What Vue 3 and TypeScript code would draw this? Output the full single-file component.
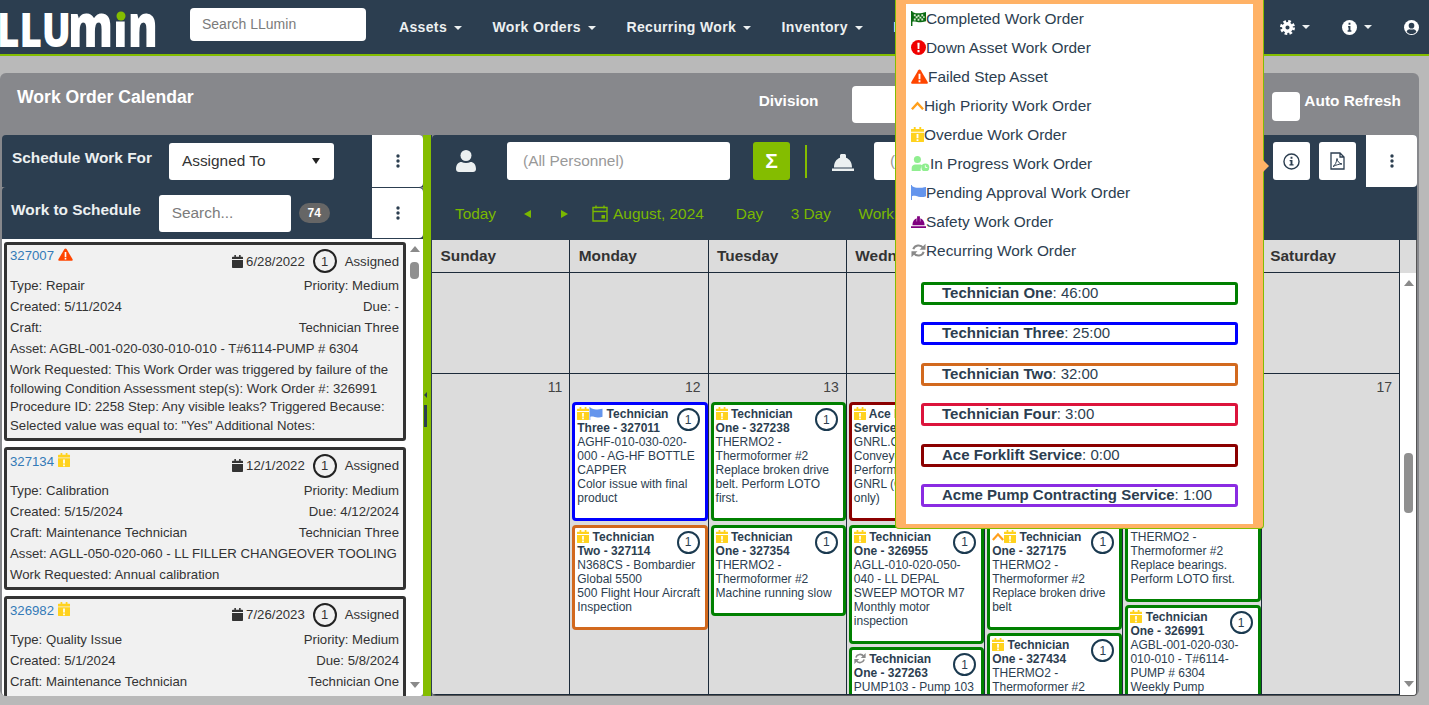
<script setup lang="ts">
interface WorkCard {
  id: string;
  icon: string;
  date: string;
  type: string;
  priority: string;
  created: string;
  due: string;
  craft: string;
  tech: string;
  asset: string;
  request: string;
}
interface CalEvent {
  icons: string[];
  title: string;
  asset: string;
  note: string;
  color: string;
}

const navItems = ['Assets', 'Work Orders', 'Recurring Work', 'Inventory', 'Insights'];
const days = ['Sunday', 'Monday', 'Tuesday', 'Wednesday', 'Thursday', 'Friday', 'Saturday'];

const cards: WorkCard[] = [
  { id: '327007', icon: 'warn', date: '6/28/2022', type: 'Repair', priority: 'Medium', created: '5/11/2024', due: '-', craft: '', tech: 'Technician Three', asset: 'AGBL-001-020-030-010-010 - T#6114-PUMP # 6304', request: 'This Work Order was triggered by failure of the following Condition Assessment step(s): Work Order #: 326991 Procedure ID: 2258 Step: Any visible leaks? Triggered Because: Selected value was equal to: "Yes" Additional Notes:' },
  { id: '327134', icon: 'overdue', date: '12/1/2022', type: 'Calibration', priority: 'Medium', created: '5/15/2024', due: '4/12/2024', craft: 'Maintenance Technician', tech: 'Technician Three', asset: 'AGLL-050-020-060 - LL FILLER CHANGEOVER TOOLING', request: 'Annual calibration' },
  { id: '326982', icon: 'overdue', date: '7/26/2023', type: 'Quality Issue', priority: 'Medium', created: '5/1/2024', due: '5/8/2024', craft: 'Maintenance Technician', tech: 'Technician One', asset: 'AGBL-001-020-030-010-010 - T#6114-PUMP # 6304', request: 'Weekly inspection' },
];

const green = '#008000';
const columns: { day: string; events: CalEvent[] }[] = [
  { day: '11', events: [] },
  { day: '12', events: [
    { icons: ['overdue', 'flag'], title: 'Technician Three - 327011', asset: 'AGHF-010-030-020-000 - AG-HF BOTTLE CAPPER', note: 'Color issue with final product', color: '#0000ff' },
    { icons: ['overdue'], title: 'Technician Two - 327114', asset: 'N368CS - Bombardier Global 5500', note: '500 Flight Hour Aircraft Inspection', color: '#d2691e' },
  ] },
  { day: '13', events: [
    { icons: ['overdue'], title: 'Technician One - 327238', asset: 'THERMO2 - Thermoformer #2', note: 'Replace broken drive belt. Perform LOTO first.', color: green },
    { icons: ['overdue'], title: 'Technician One - 327354', asset: 'THERMO2 - Thermoformer #2', note: 'Machine running slow', color: green },
  ] },
  { day: '14', events: [
    { icons: ['overdue'], title: 'Ace Forklift Service - 327301', asset: 'GNRL.CONV01 - Conveyor Line', note: 'Perform monthly lube GNRL (Conveyor belts only)', color: '#8b0000' },
    { icons: ['overdue'], title: 'Technician One - 326955', asset: 'AGLL-010-020-050-040 - LL DEPAL SWEEP MOTOR M7', note: 'Monthly motor inspection', color: green },
    { icons: ['sync'], title: 'Technician One - 327263', asset: 'PUMP103 - Pump 103', note: 'Quarterly pump service', color: green },
  ] },
  { day: '15', events: [
    { icons: ['overdue'], title: 'Technician One - 327101', asset: 'THERMO2 - Thermoformer #2', note: 'Replace broken drive belt. Perform LOTO first.', color: green },
    { icons: ['chevron', 'overdue'], title: 'Technician One - 327175', asset: 'THERMO2 - Thermoformer #2', note: 'Replace broken drive belt', color: green },
    { icons: ['overdue'], title: 'Technician One - 327434', asset: 'THERMO2 - Thermoformer #2', note: 'Replace bearings', color: green },
  ] },
  { day: '16', events: [
    { icons: ['overdue'], title: 'Technician One - 327120', asset: 'THERMO2 - Thermoformer #2', note: 'Inspect', color: green },
    { icons: ['overdue'], title: 'Technician One - 327288', asset: 'THERMO2 - Thermoformer #2', note: 'Replace bearings. Perform LOTO first.', color: green },
    { icons: ['overdue'], title: 'Technician One - 326991', asset: 'AGBL-001-020-030-010-010 - T#6114-PUMP # 6304', note: 'Weekly Pump Inspection', color: green },
  ] },
  { day: '17', events: [] },
];

const legend = [
  { icon: 'checker', label: 'Completed Work Order', w: 15 },
  { icon: 'down', label: 'Down Asset Work Order', w: 15 },
  { icon: 'warn', label: 'Failed Step Asset', w: 17 },
  { icon: 'chevron', label: 'High Priority Work Order', w: 13 },
  { icon: 'overdue', label: 'Overdue Work Order', w: 13 },
  { icon: 'progress', label: 'In Progress Work Order', w: 19 },
  { icon: 'flag', label: 'Pending Approval Work Order', w: 15 },
  { icon: 'hat', label: 'Safety Work Order', w: 15 },
  { icon: 'sync', label: 'Recurring Work Order', w: 15 },
];

const totals = [
  { name: 'Technician One', time: '46:00', color: green },
  { name: 'Technician Three', time: '25:00', color: '#0000ff' },
  { name: 'Technician Two', time: '32:00', color: '#d2691e' },
  { name: 'Technician Four', time: '3:00', color: '#dc143c' },
  { name: 'Ace Forklift Service', time: '0:00', color: '#8b0000' },
  { name: 'Acme Pump Contracting Service', time: '1:00', color: '#8a2be2' },
];
</script>

<template>
  <svg class="sprite" aria-hidden="true">
    <symbol id="i-cal" viewBox="1 0 14 16" preserveAspectRatio="none"><path d="M4 0h2v2h4V0h2v2h2a1 1 0 0 1 1 1v2H1V3a1 1 0 0 1 1-1h2z" /><path d="M1 6h14v9a1 1 0 0 1-1 1H2a1 1 0 0 1-1-1z" /></symbol>
    <symbol id="i-overdue" viewBox="1 0 14 16" preserveAspectRatio="none"><path fill="#ffd21e" d="M4 0h2v2h4V0h2v2h2.500a.5.5 0 0 1 .5.5V5H1V2.500a.5.5 0 0 1 .5-.5H4z" /><path fill="#ffd21e" d="M1 6h14v9.500a.5.5 0 0 1-.5.5h-13a.5.5 0 0 1-.5-.5z" /><path fill="#fff" d="M7 7.500h2V12H7zM7 13h2v2H7z" /></symbol>
    <symbol id="i-warn" viewBox="0 0 18 16"><path fill="#ff4500" d="M9 .5c.6 0 1 .3 1.300.8l7.400 12.600c.5.900-.1 1.900-1.100 1.900H1.400C.4 15.800-.2 14.800.3 13.900L7.700 1.300C8 .8 8.400.5 9 .5z" /><path fill="#fff" d="M8 5h2v6H8zM8 12h2v2H8z" /></symbol>
    <symbol id="i-down" viewBox="0 0 16 16"><circle cx="8" cy="8" r="8" fill="#f00000" /><path fill="#fff" d="M6.800 3h2.400L8.900 9.500H7.100zM6.900 10.700h2.200v2.300H6.900z" /></symbol>
    <symbol id="i-chevron" viewBox="0 0 14 10"><path d="M1 9 7 2.500 13 9" fill="none" stroke="#ff9f1c" stroke-width="2.600" /></symbol>
    <symbol id="i-flag" viewBox="0 0 16 16"><path fill="#6495ed" d="M0 0h1v16H0zM1 1c3 1.500 4 2 7 2s5-.5 8-1v10c-3 1.200-5 1-8 .5S4 11 1 12z" /></symbol>
    <symbol id="i-checker" viewBox="0 0 16 16"><path fill="#0a6b12" d="M0 0h1.500v16H0zM1.500 1c3 1.300 4 1.500 6.500 1.500s5-.5 8-1.500v10c-3 1-5.500 1.300-8 1s-4-1-6.500-.5z" /><path fill="#d9ead0" d="M3 3.500h2v2H3zM7 4h2v2H7zM11 3.500h2v2h-2zM5 5.700h2v2H5zM9 6h2v2H9zM13 5.500h1.500v2H13zM3 8h2v2H3zM7 8.300h2v2H7zM11 8h2v2h-2z" /></symbol>
    <symbol id="i-progress" viewBox="0 0 20 17"><circle cx="6.500" cy="4" r="4" fill="#90ee90" /><path fill="#90ee90" d="M0 17v-3.500C0 11 2 9.500 4 9.500h5c1.500 0 2.500.5 3 1.500-1.500 1.300-2.300 3.500-1.700 6z" /><circle cx="15.500" cy="13" r="4.500" fill="#90ee90" /><path d="M15.500 10.500V13h2.200" fill="none" stroke="#fff" stroke-width="1" /></symbol>
    <symbol id="i-hat" viewBox="0 0 16 14"><path fill="#800080" d="M0 12h16v2H0zM1.500 11c0-4 1.800-6.600 4.500-7.500V7h.5V1.500h3V7h.5V3.500c2.700.9 4.500 3.500 4.500 7.500z" /></symbol>
    <symbol id="i-sync" viewBox="0 0 16 16"><g fill="none" stroke="#8a8a8a" stroke-width="2.200"><path d="M13 5.200A6 6 0 0 0 2.400 6.600" /><path d="M3 10.800a6 6 0 0 0 10.600-1.400" /></g><path fill="#8a8a8a" d="M15.500 .8v6.400H9.100zM.5 15.200V8.800h6.400z" /></symbol>
    <symbol id="i-user" viewBox="0 0 20 22"><circle cx="10" cy="5.500" r="5.500" fill="#ecf0f1" /><path fill="#ecf0f1" d="M0 19c0-4.500 2.500-7 5.500-7 1.400.7 2.900 1 4.500 1s3.100-.3 4.500-1c3 0 5.500 2.500 5.500 7 0 1.700-1.300 3-3 3H3c-1.700 0-3-1.300-3-3z" /></symbol>
    <symbol id="i-hardhat" viewBox="0 0 22 19"><path fill="#ecf0f1" d="M0 16.500h22V19H0zM2 15.500c0-5 2.300-8.500 6-9.800V3.500C8 2.700 8.700 2 9.500 2h3c.8 0 1.500.7 1.500 1.500v2.200c3.700 1.300 6 4.800 6 9.800z" /></symbol>
    <symbol id="i-kebab" viewBox="0 0 4 14"><circle cx="2" cy="2" r="1.700" /><circle cx="2" cy="7" r="1.700" /><circle cx="2" cy="12" r="1.700" /></symbol>
  </svg>

  <div class="page">
    <header class="topnav">
      <svg class="logo" width="160" height="46" viewBox="0 0 160 46">
        <text x="-3" y="43" font-size="47" textLength="74" lengthAdjust="spacingAndGlyphs">LLU</text>
        <text x="68" y="43" font-size="60" textLength="90" lengthAdjust="spacingAndGlyphs">min</text>
        <rect x="114" y="0" width="14" height="17.500" fill="#2c3e50" />
        <circle cx="121" cy="12" r="4.500" fill="#84bd00" />
      </svg>
      <input class="nav-search" placeholder="Search LLumin" />
      <nav class="nav-links">
        <span v-for="item in navItems" :key="item" class="nav-link">{{ item }}</span>
      </nav>
      <div class="nav-icons">
        <span class="nav-icon caret">
          <svg width="15" height="15" viewBox="0 0 16 16"><circle cx="8" cy="8" r="4" fill="none" stroke="#fff" stroke-width="3.600" /><circle cx="8" cy="8" r="6.500" fill="none" stroke="#fff" stroke-width="3" stroke-dasharray="2.800 2.300" /></svg>
        </span>
        <span class="nav-icon caret">
          <svg width="15" height="15" viewBox="0 0 16 16"><circle cx="8" cy="8" r="8" fill="#fff" /><path fill="#2c3e50" d="M7 3h2v2H7zM6.500 6.500H9V11h1v1.500H6V11h1V8H6.500z" /></svg>
        </span>
        <span class="nav-icon">
          <svg width="15" height="15" viewBox="0 0 16 16"><circle cx="8" cy="8" r="8" fill="#fff" /><circle cx="8" cy="6" r="3" fill="#2c3e50" /><path fill="#2c3e50" d="M2.800 12.500C3.500 10.500 5 9.800 6 9.800c1.300.5 2.700.5 4 0 1 0 2.500.7 3.200 2.700C12 14 10 15 8 15s-4-1-5.200-2.500z" /></svg>
        </span>
      </div>
    </header>

    <main class="panel">
      <div class="panel-head">
        <h1>Work Order Calendar</h1>
        <span class="division">Division</span>
        <div class="division-box"></div>
        <label class="refresh"><span class="refresh-box"></span><span class="refresh-text">Auto Refresh</span></label>
      </div>

      <div class="panel-body">
        <section class="left">
          <div class="bar">
            <span class="bar-title">Schedule Work For</span>
            <div class="assigned">Assigned To<i class="down-arrow"></i></div>
            <button class="kebab"><svg width="4" height="14" fill="#2c3e50"><use href="#i-kebab" /></svg></button>
          </div>
          <div class="bar bar-second">
            <span class="bar-title">Work to Schedule</span>
            <input class="work-search" placeholder="Search..." />
            <span class="count">74</span>
            <button class="kebab"><svg width="4" height="14" fill="#2c3e50"><use href="#i-kebab" /></svg></button>
          </div>
          <div class="list-wrap">
            <div class="list">
              <article v-for="c in cards" :key="c.id" class="card">
                <div class="card-top">
                  <span class="card-id">{{ c.id }} <svg class="card-flag" :width="c.icon === 'warn' ? 15 : 12" :height="c.icon === 'warn' ? 13 : 14"><use :href="'#i-' + c.icon" /></svg></span>
                  <span class="card-meta">
                    <svg class="card-cal" width="11" height="13" fill="#333"><use href="#i-cal" /></svg>
                    <span>{{ c.date }}</span>
                    <span class="qty">1</span>
                    <span>Assigned</span>
                  </span>
                </div>
                <div class="row"><span>Type: {{ c.type }}</span><span>Priority: {{ c.priority }}</span></div>
                <div class="row"><span>Created: {{ c.created }}</span><span>Due: {{ c.due }}</span></div>
                <div class="row"><span>Craft: {{ c.craft }}</span><span>{{ c.tech }}</span></div>
                <div class="row">Asset: {{ c.asset }}</div>
                <div class="request">Work Requested: {{ c.request }}</div>
              </article>
            </div>
            <div class="scroll">
              <i class="sb-up"></i>
              <i class="sb-thumb sb-thumb-left"></i>
              <i class="sb-fill"></i>
              <i class="sb-down"></i>
            </div>
          </div>
        </section>

        <div class="splitter"><i class="split-arrow"></i><i class="split-grip"></i></div>

        <section class="right">
          <div class="toolbar">
            <svg class="tool-user" width="20" height="22"><use href="#i-user" /></svg>
            <input class="tool-input" placeholder="(All Personnel)" />
            <button class="sigma">Σ</button>
            <i class="divider"></i>
            <svg class="tool-hat" width="22" height="19"><use href="#i-hardhat" /></svg>
            <input class="tool-input second" placeholder="(All Crafts)" />
            <button class="tool-btn">
              <svg width="17" height="17" viewBox="0 0 18 18"><circle cx="9" cy="9" r="8" fill="none" stroke="#2c3e50" stroke-width="1.500" /><path fill="#2c3e50" d="M8 4h2v2H8zM7 7.500h3V12h1.200v1.300H6.800V12H8V8.800H7z" /></svg>
            </button>
            <button class="tool-btn">
              <svg width="15" height="18" viewBox="0 0 15 18"><path d="M1 1h9l4 4v12H1z M10 1v4h4" fill="none" stroke="#2c3e50" stroke-width="1.300" /><path d="M3 14.500c2-1 3.500-4 4-8 .5 3 2 5 5 5.500-3 0-6 1-9 2.500z" fill="none" stroke="#2c3e50" stroke-width="1" /></svg>
            </button>
            <button class="kebab"><svg width="4" height="14" fill="#2c3e50"><use href="#i-kebab" /></svg></button>
          </div>

          <div class="cal-nav">
            <span class="today">Today</span>
            <i class="tri-left"></i>
            <i class="tri-right"></i>
            <svg class="cal-icon" width="16" height="17" viewBox="0 0 16 17"><path d="M1 2.500h14v13.500H1zM1 6.500h14M4 .5v3M12 .5v3" fill="none" stroke="#7ab800" stroke-width="1.400" /><path fill="#7ab800" d="M9.500 10H13v3.500H9.500z" /></svg>
            <span class="month">August, 2024</span>
            <span class="view">Day</span>
            <span class="view">3 Day</span>
            <span class="view">Work Week</span>
          </div>

          <div class="cal-wrap">
            <div class="week-head">
              <div v-for="d in days" :key="d" class="week-day">{{ d }}</div>
            </div>
            <div class="cal-body">
              <div class="cal">
                <div class="week-empty">
                  <div v-for="d in days" :key="d" class="empty-cell"></div>
                </div>
                <div class="week">
                  <div v-for="col in columns" :key="col.day" class="cell">
                    <div class="date">{{ col.day }}</div>
                    <div v-for="e in col.events" :key="e.title" class="event" :style="{ borderColor: e.color }">
                      <span class="qty small">1</span>
                      <div class="event-title"><svg v-for="ic in e.icons" :key="ic" class="event-icon" :width="ic === 'flag' ? 14 : 12" height="13"><use :href="'#i-' + ic" /></svg> {{ e.title }}</div>
                      <div>{{ e.asset }}</div>
                      <div>{{ e.note }}</div>
                    </div>
                  </div>
                </div>
              </div>
              <div class="scroll">
                <i class="sb-up"></i>
                <i class="sb-thumb sb-thumb-right"></i>
                <i class="sb-fill"></i>
                <i class="sb-down"></i>
              </div>
            </div>
          </div>
        </section>
      </div>
    </main>

    <aside class="legend">
      <i class="legend-arrow"></i>
      <div class="legend-inner">
        <div v-for="l in legend" :key="l.label" class="legend-item">
          <svg :width="l.w" height="15"><use :href="'#i-' + l.icon" /></svg><span>{{ l.label }}</span>
        </div>
        <div class="totals">
          <div v-for="t in totals" :key="t.name" class="total" :style="{ borderColor: t.color }"><b>{{ t.name }}</b>: {{ t.time }}</div>
        </div>
      </div>
    </aside>
  </div>
</template>

<style>
html, body { margin: 0; height: 100%; overflow: hidden; background: #b9b9b9; }
</style>

<style scoped>
* { box-sizing: border-box; }
.sprite { display: none; }
.page { position: relative; height: 705px; overflow: hidden; display: flex; flex-direction: column; font-family: "Liberation Sans", Arial, sans-serif; font-size: 15.400px; color: #2c3e50; }

.topnav { display: flex; align-items: center; height: 56px; flex-shrink: 0; background: #2c3e50; border-bottom: 2px solid #84bd00; }
.logo { flex-shrink: 0; margin-top: -1px; }
.logo text { font-family: "Open Sans", sans-serif; font-weight: 800; fill: #fff; }
.nav-search { width: 176px; height: 33px; margin: -6px 0 0 30px; padding: 0 12px; border: 0; border-radius: 4px; background: #fff; font: 14px "Liberation Sans", Arial, sans-serif; }
.nav-search::placeholder { color: #7b7b7b; }
.nav-links { display: flex; gap: 30.500px; margin-left: 33px; white-space: nowrap; }
.nav-link { font-size: 14px; font-weight: 700; letter-spacing: .35px; color: #ecf0f1; }
.nav-link::after { content: ""; display: inline-block; margin-left: 7px; vertical-align: 2px; border: 4px solid transparent; border-top-color: #ecf0f1; border-bottom: 0; }
.nav-icons { display: flex; align-items: center; margin-left: auto; gap: 32px; padding-right: 10px; }
.nav-icon { display: flex; align-items: center; }
.caret::after { content: ""; margin-left: 7px; border: 4px solid transparent; border-top-color: #ecf0f1; border-bottom: 0; }

.panel { display: flex; flex-direction: column; flex: 1; min-height: 0; margin: 17px 10px 9px 0; background: #87888c; border-radius: 6px; }
.panel-head { display: flex; align-items: center; height: 62px; flex-shrink: 0; padding-left: 17px; color: #fff; font-weight: 700; }
.panel-head h1 { margin: 0 0 14px; font-size: 17.600px; }
.division { margin: 0 0 6px 565px; }
.division-box { width: 60px; height: 37px; margin: 0 0 0 33px; background: #fff; border-radius: 4px; }
.refresh { display: flex; align-items: center; gap: 4px; margin-left: auto; padding-right: 18px; }
.refresh-box { width: 28px; height: 29px; margin-top: 5px; background: #fff; border-radius: 4px; }
.refresh-text { margin-bottom: 6px; }

.panel-body { display: flex; flex: 1; min-height: 0; padding: 0 2px; }
.left { display: flex; flex-direction: column; width: 421px; flex-shrink: 0; }
.bar { display: flex; align-items: center; height: 52px; flex-shrink: 0; background: #2c3e50; border-radius: 4px 4px 0 0; padding-left: 10px; color: #ecf0f1; }
.bar-title { margin-bottom: 7px; font-weight: 700; white-space: nowrap; }
.assigned { display: flex; align-items: center; justify-content: space-between; width: 165px; height: 37px; margin-left: 17px; padding: 0 14px 0 13px; background: #fff; border-radius: 3px; color: #333; }
.down-arrow { border: 4.500px solid transparent; border-top: 6px solid #222; border-bottom: 0; }
.kebab { display: flex; align-items: center; justify-content: center; width: 51px; height: 100%; margin-left: auto; padding: 0; background: #fff; border: 0; border-radius: 0 4px 4px 0; }
.bar-second { height: 52px; padding-left: 9px; }
.bar-second .kebab { height: 50px; }
.work-search { width: 132px; height: 37px; margin-left: 18px; padding: 0 13px; background: #fff; border: 0; border-radius: 3px; font: 15.400px "Liberation Sans", Arial, sans-serif; }
.work-search::placeholder { color: #7b7b7b; }
.count { margin-left: 8px; width: 31px; height: 20px; line-height: 20px; text-align: center; background: #666; color: #fff; border-radius: 10px; font-size: 12px; font-weight: 700; }

.list-wrap { display: flex; flex: 1; min-height: 0; background: #fff; border-radius: 0 0 4px 4px; overflow: hidden; }
.list { flex: 1; min-width: 0; overflow: hidden; padding: 3px 0 0 2px; }
.card { margin-bottom: 6px; padding: 2px 4px 2px 3px; background: #f1f1f1; border: 3px solid #333; border-radius: 3px; color: #333; font-size: 13.200px; }
.card-top { display: flex; justify-content: space-between; height: 28px; }
.card-id { color: #337ab7; padding-top: 1px; }
.card-flag { vertical-align: -1px; }
.card-meta { display: flex; align-items: center; gap: 8px; height: 26px; margin-top: 1px; }
.card-cal { margin-right: -5px; }
.qty { display: flex; align-items: center; justify-content: center; width: 24px; height: 24px; border: 2px solid #222; border-radius: 50%; font-size: 13px; }
.row { display: flex; justify-content: space-between; height: 21px; line-height: 21px; white-space: nowrap; }
.request { line-height: 18.700px; margin-top: 2px; }

.scroll { display: flex; flex-direction: column; align-items: center; width: 17px; flex-shrink: 0; background: #fff; padding: 7px 0 8px; }
.sb-up { border: 5px solid transparent; border-bottom: 6px solid #8a8a8a; border-top: 0; }
.sb-down { border: 5px solid transparent; border-top: 6px solid #8a8a8a; border-bottom: 0; }
.sb-thumb { width: 9px; background: #909090; border-radius: 4px; }
.sb-thumb-left { height: 17px; margin-top: 10px; }
.sb-thumb-right { height: 60px; margin-top: 167px; }
.sb-fill { flex: 1; }

.splitter { position: relative; width: 8px; flex-shrink: 0; background: #84bd00; }
.split-arrow { position: absolute; top: 257px; left: 1px; border: 3px solid transparent; border-right-color: #2c3e50; border-left: 0; }
.split-grip { position: absolute; top: 270px; left: 1px; width: 3px; height: 22px; background: #2c3e50; }

.right { display: flex; flex-direction: column; flex: 1; min-width: 0; border-left: 1px solid #2c3e50; }
.toolbar { display: flex; align-items: center; height: 52px; flex-shrink: 0; background: #2c3e50; border-radius: 4px 4px 0 0; }
.tool-user { margin-left: 24px; }
.tool-input { width: 223px; height: 38px; margin-left: 31px; padding: 0 16px; background: #fff; border: 0; border-radius: 3px; font: 15.400px "Liberation Sans", Arial, sans-serif; }
.tool-input::placeholder { color: #999; }
.sigma { width: 37px; height: 38px; margin-left: 23px; background: #84bd00; border: 0; border-radius: 3px; color: #fff; font: 700 21px "Liberation Sans", Arial, sans-serif; }
.divider { width: 2px; height: 33px; margin-left: 15px; background: #84bd00; }
.tool-hat { margin-left: 25px; }
.tool-input.second { margin-left: 20px; }
.tool-btn { display: flex; align-items: center; justify-content: center; width: 37px; height: 38px; margin-left: 9px; padding: 0; background: #fff; border: 0; border-radius: 3px; }
.tool-btn:nth-of-type(2) { margin-left: auto; }
.toolbar .kebab { margin-left: 10px; }

.cal-nav { display: flex; align-items: center; height: 53px; flex-shrink: 0; background: #2c3e50; color: #7ab800; padding-left: 23px; white-space: nowrap; }
.tri-left { margin-left: 28px; border: 4px solid transparent; border-right: 7px solid #7ab800; border-left: 0; }
.tri-right { margin-left: 30px; border: 4px solid transparent; border-left: 7px solid #7ab800; border-right: 0; }
.cal-icon { margin-left: 24px; }
.month { margin-left: 5px; }
.view { margin-left: 27.500px; }
.month + .view { margin-left: 32px; }

.cal-wrap { display: flex; flex-direction: column; flex: 1; min-height: 0; background: #dcdcdc; border-right: 1px solid #555; border-bottom: 1px solid #555; border-radius: 0 0 4px 4px; overflow: hidden; }
.week-head { display: grid; grid-template-columns: repeat(7, 1fr); width: 968px; flex-shrink: 0; border-bottom: 1px solid #1c2b3a; }
.week-day { height: 32px; line-height: 32px; padding-left: 8.500px; font-weight: 700; color: #333; border-right: 1px solid #1c2b3a; }
.cal-body { display: flex; flex: 1; min-height: 0; }
.cal { width: 968px; flex-shrink: 0; overflow: hidden; display: flex; flex-direction: column; }
.week-empty, .week { display: grid; grid-template-columns: repeat(7, 1fr); border-bottom: 1px solid #1c2b3a; }
.empty-cell { height: 100px; border-right: 1px solid #1c2b3a; }
.week { flex: 1; min-height: 0; }
.cell { padding: 0 0 0 2px; border-right: 1px solid #1c2b3a; min-height: 0; overflow: hidden; }
.date { height: 28px; padding-right: 7px; line-height: 26px; text-align: right; color: #444; font-size: 14px; }
.event { margin-bottom: 3.500px; padding: 2px 2px 13px; background: #fff; border: 3px solid; border-radius: 4px; font-size: 12px; line-height: 14px; color: #2c3e50; }
.event-title { font-weight: 700; }
.event-icon { vertical-align: -2px; }
.qty.small { float: right; width: 23px; height: 23px; margin: 1px 3px 0 4px; border-color: #1b3a50; font-size: 12px; }

.legend { position: absolute; top: -2px; left: 895px; width: 369px; height: 531px; padding: 6px 10px 4px; background: #ffb266; border: 1px solid #84bd00; border-top: 0; border-radius: 0 0 4px 4px; }
.legend-arrow { position: absolute; top: 162px; left: 100%; border: 6px solid transparent; border-left: 6px solid #ffb266; border-right: 0; }
.legend-inner { height: 100%; background: #fff; padding: 0 5px; }
.legend-item { display: flex; align-items: center; height: 29px; white-space: nowrap; }
.totals { display: flex; flex-direction: column; gap: 17.400px; margin: 17px 10px 0 10px; }
.total { height: 23px; padding-left: 18px; border: 3px solid; border-radius: 3px; line-height: 16px; font-size: 15px; white-space: nowrap; }
</style>
